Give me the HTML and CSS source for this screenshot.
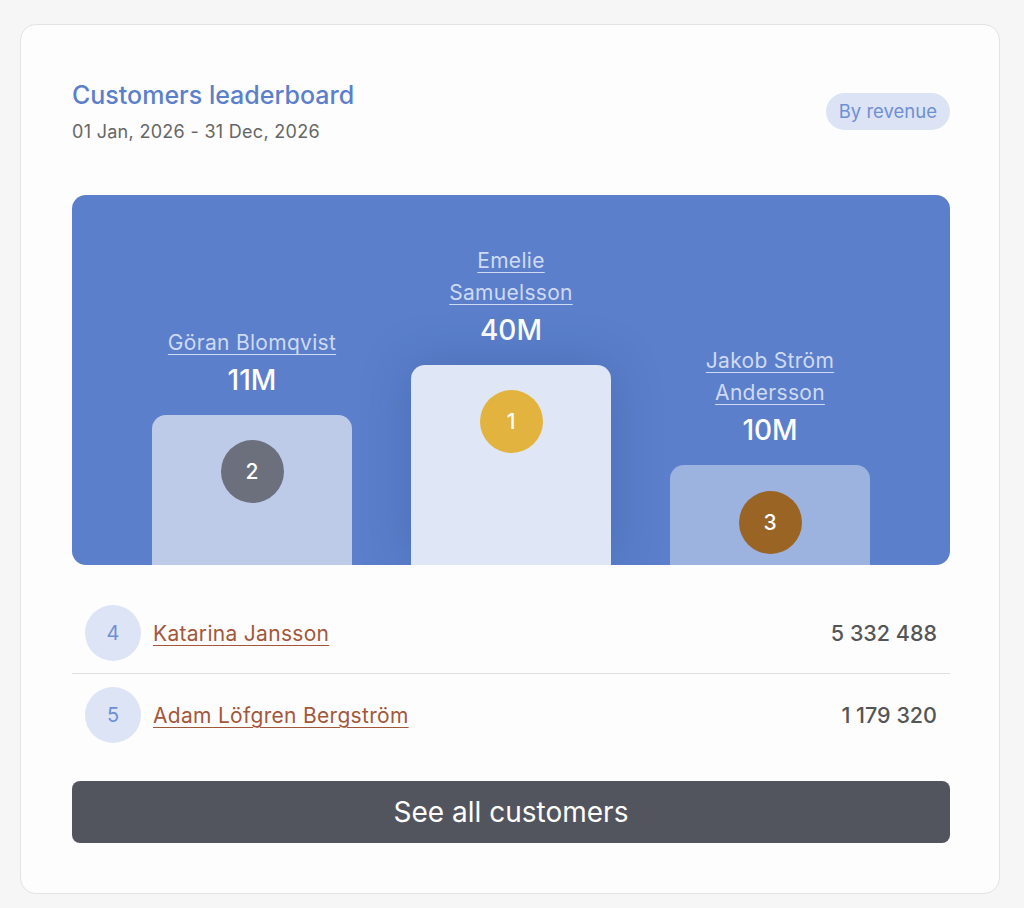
FILE: index.html
```html
<!DOCTYPE html>
<html lang="en">
<head>
<meta charset="utf-8">
<title>Customers leaderboard</title>
<link rel="stylesheet" href="styles.css">
</head>
<body>
<div class="card">
  <div class="header">
    <div class="titles">
      <div class="title">Customers leaderboard</div>
      <div class="date">01 Jan, 2026 - 31 Dec, 2026</div>
    </div>
    <span class="badge">By revenue</span>
  </div>

  <div class="podium">
    <div class="col">
      <a class="pname" href="#">Göran Blomqvist</a>
      <div class="pvalue">11M</div>
      <div class="block block-2"><span class="medal medal-2">2</span></div>
    </div>
    <div class="col">
      <a class="pname" href="#">Emelie<br>Samuelsson</a>
      <div class="pvalue">40M</div>
      <div class="block block-1"><span class="medal medal-1">1</span></div>
    </div>
    <div class="col">
      <a class="pname" href="#">Jakob Ström<br>Andersson</a>
      <div class="pvalue">10M</div>
      <div class="block block-3"><span class="medal medal-3">3</span></div>
    </div>
  </div>

  <div class="list">
    <div class="row">
      <span class="rank">4</span>
      <a class="rname" href="#">Katarina Jansson</a>
      <span class="rvalue">5 332 488</span>
    </div>
    <div class="row">
      <span class="rank">5</span>
      <a class="rname" href="#">Adam Löfgren Bergström</a>
      <span class="rvalue">1 179 320</span>
    </div>
  </div>

  <button class="btn">See all customers</button>
</div>
</body>
</html>
```

FILE: styles.css
```css
* { box-sizing: border-box; }
html, body { margin: 0; padding: 0; }
body {
  background: #f6f6f6;
  font-family: Inter, "Noto Sans", sans-serif;
  padding: 24px 24px 14px 20px;
}
.card {
  width: 980px;
  background: #fdfdfd;
  border: 1px solid #e3e3e3;
  border-radius: 16px;
  padding: 56px 49px 50px 51px;
}
.header {
  display: flex;
  justify-content: space-between;
  align-items: center;
}
.title {
  font-size: 25px;
  line-height: 28px;
  font-weight: 500;
  color: #5b7fcb;
}
.date {
  margin-top: 11px;
  font-size: 18px;
  line-height: 24px;
  letter-spacing: 0.3px;
  color: #666;
}
.badge {
  display: inline-block;
  background: #dbe3f4;
  color: #6f8fd3;
  font-size: 18.5px;
  line-height: 37px;
  padding: 0 13px;
  border-radius: 19px;
  margin-top: -3px;
}
.podium {
  margin-top: 51px;
  height: 370px;
  background: #5b7fcb;
  border-radius: 14px;
  display: flex;
  justify-content: center;
  align-items: flex-end;
  gap: 59px;
  overflow: hidden;
}
.col {
  width: 200px;
  display: flex;
  flex-direction: column;
  align-items: center;
  text-align: center;
}
.pname {
  font-size: 21px;
  line-height: 32px;
  letter-spacing: 0.3px;
  color: #cfdaf2;
  text-decoration: underline;
  text-decoration-color: #cfdaf2;
  text-underline-offset: 4px;
  text-decoration-thickness: 1px;
}
.pvalue {
  font-size: 28px;
  line-height: 32px;
  font-weight: 500;
  color: #fff;
  margin-top: 5px;
  margin-bottom: 19px;
}
.block {
  width: 200px;
  border-radius: 14px 14px 0 0;
  display: flex;
  justify-content: center;
  padding-top: 25px;
}
.block-1 { height: 200px; background: #dfe6f5; box-shadow: 0 0 50px rgba(40, 60, 120, 0.28); }
.block-2 { height: 150px; background: #bdcbe9; }
.block-3 { height: 100px; background: #9cb3e0; padding-top: 26px; }
.medal {
  width: 63px;
  height: 63px;
  border-radius: 50%;
  color: #fff;
  font-size: 21px;
  font-weight: 500;
  display: flex;
  align-items: center;
  justify-content: center;
}
.medal-1 { background: #e2b43f; }
.medal-2 { background: #6b707c; }
.medal-3 { background: #9a6424; }
.list {
  margin-top: 29px;
}
.row {
  display: flex;
  align-items: center;
  padding: 11px 13px 12px 13px;
}
.row + .row {
  border-top: 1px solid #e0e0e0;
  padding-top: 13px;
}
.rank {
  width: 56px;
  height: 56px;
  border-radius: 50%;
  background: #dce4f5;
  color: #6f8fd3;
  font-size: 20px;
  display: flex;
  align-items: center;
  justify-content: center;
  flex-shrink: 0;
}
.rname {
  margin-left: 12px;
  font-size: 21px;
  letter-spacing: 0.3px;
  color: #a3573a;
  text-decoration: underline;
  text-underline-offset: 4px;
  text-decoration-thickness: 1px;
}
.rvalue {
  margin-left: auto;
  font-size: 21.5px;
  font-weight: 500;
  color: #555;
}
.btn {
  display: block;
  width: 100%;
  margin-top: 26px;
  height: 62px;
  border: none;
  border-radius: 8px;
  background: #52555e;
  color: #fff;
  font-family: Inter, "Noto Sans", sans-serif;
  font-size: 28px;
  font-weight: 400;
}
```
